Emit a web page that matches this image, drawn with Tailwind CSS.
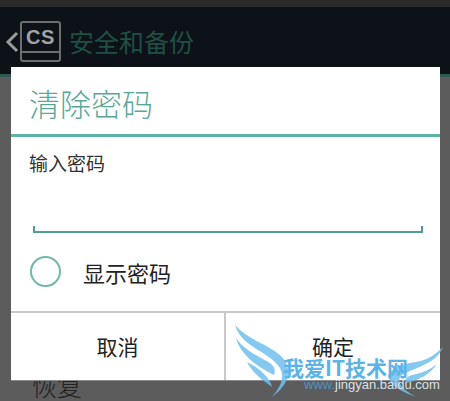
<!DOCTYPE html>
<html lang="zh">
<head>
<meta charset="utf-8">
<script src="https://cdn.jsdelivr.net/npm/@tailwindcss/browser@4"></script>
</head>
<body class="m-0">
<div class="relative w-[450px] h-[401px] overflow-hidden bg-[#5c5c5c] font-['Noto_Sans_CJK_SC','Noto_Sans',sans-serif]">
  <div class="h-[7px] bg-[#2b2b2b]"></div>
  <div class="h-[70px] bg-[#0c1217] border-b-[3px] border-[#2c5a4e] flex items-center pl-[4px] pt-[2px]">
    <svg width="15" height="22" viewBox="0 0 15 22" fill="none" class="shrink-0"><path d="M13 2 L4 11 L13 20" stroke="#9b9b9b" stroke-width="3"/></svg>
    <div class="ml-[1px] w-[41px] h-[41px] shrink-0 rounded-[3px] border-[2px] border-[#6e6e6e] flex flex-col">
      <div class="flex-1 flex items-center justify-center text-[#a2a2a2] font-['Liberation_Sans'] font-bold text-[20px] leading-none tracking-[0.5px]">CS</div>
      <div class="h-[9px] border-t-[2px] border-[#6e6e6e]"></div>
    </div>
    <div class="ml-[8px] text-[25px] leading-none text-[#1f4f45]">安全和备份</div>
  </div>
  <div class="absolute left-[32px] top-[373px] text-[25px] leading-none text-[#222] font-light">恢复</div>
  <div class="absolute left-[11px] top-[67px] w-[429px] h-[314px] bg-white border-b border-[#8a8a8a] flex flex-col">
    <div class="h-[70px] border-b-[3px] border-[#5fb5a5] flex items-center pl-[18px] pt-[4px]">
      <span class="text-[31px] leading-none text-[#5aa79a] font-light">清除密码</span>
    </div>
    <div class="pl-[18px] pt-[14px] text-[19px] leading-[24px] text-[#333]">输入密码</div>
    <div class="ml-[22px] mr-[17px] mt-[51px] h-[7px] border-l-[2px] border-r-[2px] border-b-[2px] border-[#4f9d94]"></div>
    <div class="flex items-center pl-[19px] mt-[23px]">
      <div class="w-[31px] h-[31px] rounded-full border-[2px] border-[#6fb8ab]"></div>
      <span class="ml-[22px] text-[22px] leading-none text-[#222]">显示密码</span>
    </div>
    <div class="mt-auto h-[69px] border-t-[2px] border-[#c8c8c8] flex">
      <div class="w-[215px] flex items-center justify-center text-[21px] leading-none text-[#222] border-r-[2px] border-[#c8c8c8]">取消</div>
      <div class="flex-1 flex items-center justify-center text-[21px] leading-none text-[#222]">确定</div>
    </div>
  </div>
  <svg class="absolute left-[230px] top-[320px]" width="220" height="81" viewBox="0 0 220 81" fill="#72c0ee" opacity="0.85">
    <path d="M5 5 C12 28 38 30 50 48 C55 58 50 68 42 77 C60 64 63 48 51 36 C38 24 18 20 5 5 Z"/>
    <path d="M6 18 C10 34 26 46 44 55 C46 50 44 46 40 43 C28 36 14 30 6 18 Z"/>
    <path d="M17 42 C22 52 32 60 42 67 C40 58 30 48 17 42 Z"/>
    <path d="M213 27 C206 44 188 46 172 55 C166 60 170 68 186 77 C172 72 160 66 158 56 C160 48 172 44 186 42 C198 40 206 34 213 27 Z"/>
    <path d="M207 44 C200 54 190 60 176 63 C174 60 176 57 182 55 C192 53 200 50 207 44 Z"/>
  </svg>
  <div class="absolute left-[283px] top-[357px] text-[21px] leading-none font-bold text-[#5cb3e6] whitespace-nowrap">我爱IT技术网</div>
  <div class="absolute left-[304px] top-[378px] text-[13px] leading-none font-['Liberation_Sans'] whitespace-nowrap text-[#4f93c4]">www.<span class="text-[#d8e2ea]">jingyan.baidu.com</span></div>
</div>
</body>
</html>
